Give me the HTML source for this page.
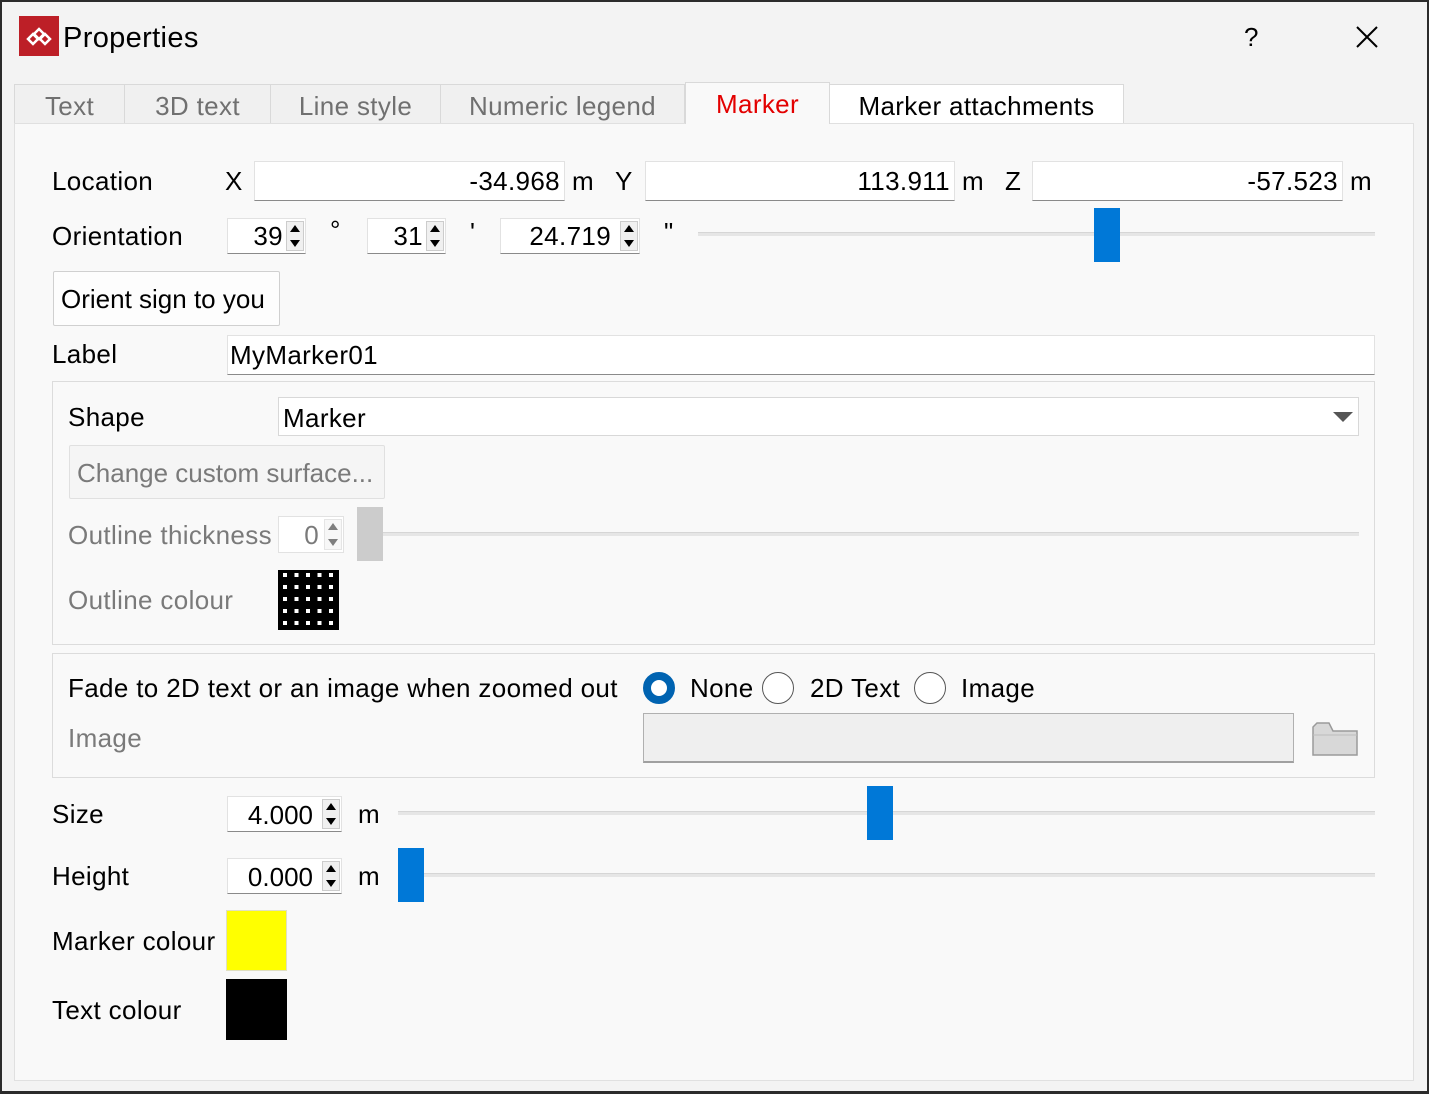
<!DOCTYPE html>
<html><head><meta charset="utf-8"><style>
*{box-sizing:border-box;margin:0;padding:0}
body{width:1429px;height:1094px;background:#f3f3f3;font-family:"Liberation Sans",sans-serif;font-size:26px;letter-spacing:0.35px;color:#000;position:relative;overflow:hidden}
.a{position:absolute;white-space:nowrap}
.t{line-height:30px;height:30px;margin-top:-1px}
.g{color:#7a7a7a}
.in{background:#fff;border:1px solid #e2e2e2;border-bottom:1px solid #8a8a8a;text-align:right;padding-right:4px;line-height:38px}
.sp{position:absolute;width:18px;right:1px;top:2px;bottom:2px;background:#f0f0f0;border:1px solid #ccc}
.sp:before{content:"";position:absolute;left:3px;top:3px;border:5px solid transparent;border-bottom:7px solid #000;border-top:0}
.sp:after{content:"";position:absolute;left:3px;bottom:3px;border:5px solid transparent;border-top:7px solid #000;border-bottom:0}
.track{position:absolute;height:4px;background:#e6e6e6;border-top:1px solid #d6d6d6}
.thumb{position:absolute;width:26px;height:54px;background:#0078d7}
.box{position:absolute;border:1px solid #dcdcdc}
.tab{position:absolute;top:84px;height:39px;background:#f0f0f0;border:1px solid #d9d9d9;border-bottom:none;color:#707070;text-align:center;line-height:42px}
.radio{position:absolute;width:32px;height:32px;border-radius:50%;border:1.5px solid #555;background:#fff}
</style></head><body>
<div class="a" style="left:0;top:0;width:1429px;height:1094px;border:2px solid #2b2b2b;border-bottom-width:3px;z-index:9;pointer-events:none"></div>
<div class="a" style="left:19px;top:16px;width:40px;height:40px;background:#bd1f27"><svg width="40" height="40"><g fill="none" stroke="#fff" stroke-width="2.5"><path d="M15 18 L20 13 L25 18 L20 23Z"/><path d="M9 23 L14 18 L19 23 L14 28Z"/><path d="M21 23 L26 18 L31 23 L26 28Z"/></g></svg></div>
<div class="a" style="left:63px;top:20px;font-size:29px;line-height:36px">Properties</div>
<div class="a" style="left:1244px;top:22px;font-size:26px">?</div>
<svg class="a" style="left:1356px;top:26px" width="22" height="22"><path d="M1 1L21 21M21 1L1 21" stroke="#000" stroke-width="2"/></svg>
<div class="a" style="left:14px;top:123px;width:1400px;height:958px;background:#f9f9f9;border:1px solid #e0e0e0"></div>
<div class="a" style="left:14px;top:122px;width:671px;height:1px;background:#c8c8c8"></div>
<div class="a" style="left:829px;top:122px;width:295px;height:1px;background:#c8c8c8"></div>
<div class="tab" style="left:14px;width:111px">Text</div>
<div class="tab" style="left:124px;width:147px">3D text</div>
<div class="tab" style="left:270px;width:171px">Line style</div>
<div class="tab" style="left:440px;width:245px">Numeric legend</div>
<div class="tab" style="left:685px;top:82px;height:42px;width:145px;background:#f9f9f9;color:#e30000;line-height:42px;border-bottom:none">Marker</div>
<div class="tab" style="left:829px;width:295px;background:#fff;color:#000">Marker attachments</div>
<div class="a t" style="left:52px;top:167px">Location</div>
<div class="a t" style="left:225px;top:167px">X</div>
<div class="a in" style="left:254px;top:161px;width:311px;height:40px">-34.968</div>
<div class="a t" style="left:572px;top:167px">m</div>
<div class="a t" style="left:615px;top:167px">Y</div>
<div class="a in" style="left:645px;top:161px;width:310px;height:40px">113.911</div>
<div class="a t" style="left:962px;top:167px">m</div>
<div class="a t" style="left:1005px;top:167px">Z</div>
<div class="a in" style="left:1032px;top:161px;width:311px;height:40px">-57.523</div>
<div class="a t" style="left:1350px;top:167px">m</div>
<div class="a t" style="left:52px;top:222px">Orientation</div>
<div class="a in" style="left:227px;top:218px;width:79px;height:36px;line-height:34px;padding-right:22px">39<div class="sp"></div></div>
<div class="a t" style="left:330px;top:216px">°</div>
<div class="a in" style="left:367px;top:218px;width:79px;height:36px;line-height:34px;padding-right:22px">31<div class="sp"></div></div>
<div class="a t" style="left:470px;top:218px">'</div>
<div class="a in" style="left:500px;top:218px;width:140px;height:36px;line-height:34px;padding-right:28px">24.719<div class="sp"></div></div>
<div class="a t" style="left:664px;top:218px">"</div>
<div class="track" style="left:698px;top:232px;width:677px"></div>
<div class="thumb" style="left:1094px;top:208px"></div>
<div class="a" style="left:53px;top:271px;width:227px;height:55px;background:#fdfdfd;border:1px solid #d0d0d0;border-radius:2px;line-height:55px;padding-left:7px;letter-spacing:0">Orient sign to you</div>
<div class="a t" style="left:52px;top:340px">Label</div>
<div class="a in" style="left:227px;top:335px;width:1148px;height:40px;text-align:left;padding-left:2px">MyMarker01</div>
<div class="box" style="left:52px;top:381px;width:1323px;height:264px"></div>
<div class="a t" style="left:68px;top:403px">Shape</div>
<div class="a" style="left:278px;top:397px;width:1081px;height:39px;background:#fff;border:1px solid #d8d8d8;line-height:40px;padding-left:4px">Marker</div>
<div class="a" style="left:1333px;top:412px;border:10px solid transparent;border-top:10px solid #555;border-bottom:0"></div>
<div class="a g" style="left:69px;top:445px;width:316px;height:54px;border:1px solid #e0e0e0;border-radius:2px;background:#f5f5f5;line-height:54px;padding-left:7px;letter-spacing:0">Change custom surface...</div>
<div class="a t g" style="left:68px;top:521px">Outline thickness</div>
<div class="a in g" style="left:278px;top:516px;width:66px;height:37px;line-height:37px;padding-right:24px;border-bottom-color:#e2e2e2">0<div class="sp" style="opacity:.5"></div></div>
<div class="track" style="left:383px;top:532px;width:976px"></div>
<div class="a" style="left:357px;top:507px;width:26px;height:54px;background:#cccccc"></div>
<div class="a t g" style="left:68px;top:586px">Outline colour</div>
<svg class="a" style="left:278px;top:570px" width="61" height="60"><defs><pattern id="p" width="11.5" height="12" patternUnits="userSpaceOnUse"><rect width="11.5" height="12" fill="#000"/><rect x="5" y="3" width="4" height="4" fill="#fff"/></pattern></defs><rect width="61" height="60" fill="url(#p)"/></svg>
<div class="box" style="left:52px;top:653px;width:1323px;height:125px"></div>
<div class="a t" style="left:68px;top:674px">Fade to 2D text or an image when zoomed out</div>
<div class="radio" style="left:643px;top:672px;border:8px solid #0063b1"></div>
<div class="a t" style="left:690px;top:674px">None</div>
<div class="radio" style="left:762px;top:672px"></div>
<div class="a t" style="left:810px;top:674px">2D Text</div>
<div class="radio" style="left:914px;top:672px"></div>
<div class="a t" style="left:961px;top:674px">Image</div>
<div class="a t g" style="left:68px;top:724px">Image</div>
<div class="a" style="left:643px;top:713px;width:651px;height:50px;background:#efefef;border:1px solid #b0b0b0;border-bottom:2px solid #a0a0a0"></div>
<svg class="a" style="left:1311px;top:719px" width="48" height="38"><path d="M2 8 L2 36 L46 36 L46 12 L22 12 L18 4 L6 4Z" fill="#d8d8d8" stroke="#9a9a9a" stroke-width="1.5"/><path d="M2 16 L46 16" stroke="#bcbcbc"/></svg>
<div class="a t" style="left:52px;top:800px">Size</div>
<div class="a in" style="left:227px;top:796px;width:115px;height:36px;line-height:36px;padding-right:28px;letter-spacing:0">4.000<div class="sp"></div></div>
<div class="a t" style="left:358px;top:800px">m</div>
<div class="track" style="left:398px;top:811px;width:977px"></div>
<div class="thumb" style="left:867px;top:786px"></div>
<div class="a t" style="left:52px;top:862px">Height</div>
<div class="a in" style="left:227px;top:858px;width:115px;height:36px;line-height:36px;padding-right:28px;letter-spacing:0">0.000<div class="sp"></div></div>
<div class="a t" style="left:358px;top:862px">m</div>
<div class="track" style="left:398px;top:873px;width:977px"></div>
<div class="thumb" style="left:398px;top:848px"></div>
<div class="a t" style="left:52px;top:927px">Marker colour</div>
<div class="a" style="left:226px;top:910px;width:61px;height:61px;background:#ffff00;border:1px solid #e0e0c0"></div>
<div class="a t" style="left:52px;top:996px">Text colour</div>
<div class="a" style="left:226px;top:979px;width:61px;height:61px;background:#000"></div>
</body></html>
